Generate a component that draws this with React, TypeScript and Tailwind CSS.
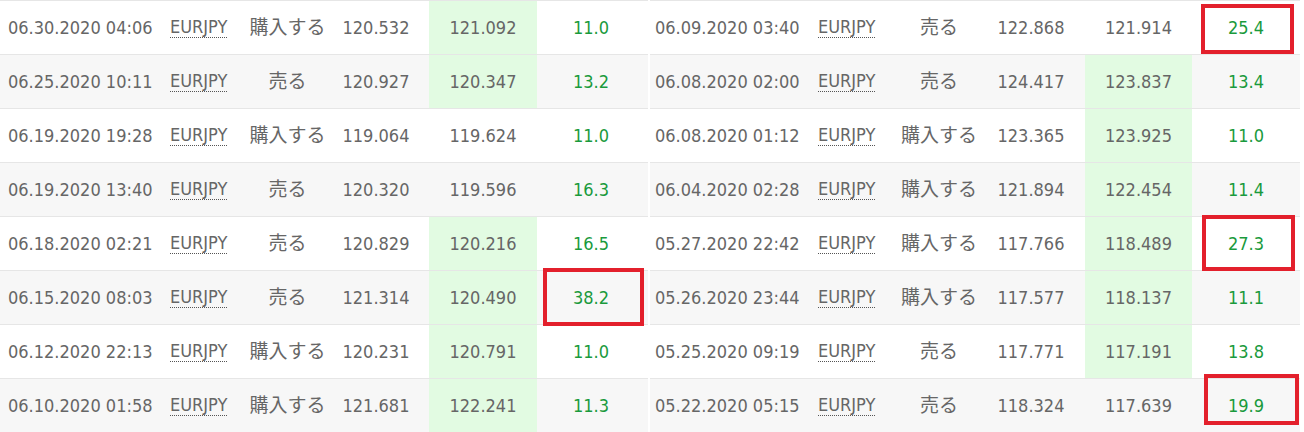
type Row = {
  date: string
  side: string
  open: string
  close: string
  pips: string
  hit?: boolean
  box?: string
}

const leftRows: Row[] = [
  { date: '06.30.2020 04:06', side: '購入する', open: '120.532', close: '121.092', pips: '11.0', hit: true },
  { date: '06.25.2020 10:11', side: '売る', open: '120.927', close: '120.347', pips: '13.2', hit: true },
  { date: '06.19.2020 19:28', side: '購入する', open: '119.064', close: '119.624', pips: '11.0' },
  { date: '06.19.2020 13:40', side: '売る', open: '120.320', close: '119.596', pips: '16.3' },
  { date: '06.18.2020 02:21', side: '売る', open: '120.829', close: '120.216', pips: '16.5', hit: true },
  {
    date: '06.15.2020 08:03',
    side: '売る',
    open: '121.314',
    close: '120.490',
    pips: '38.2',
    hit: true,
    box: 'left-[6px] -top-[3px] w-[101px] h-[58px]',
  },
  { date: '06.12.2020 22:13', side: '購入する', open: '120.231', close: '120.791', pips: '11.0', hit: true },
  { date: '06.10.2020 01:58', side: '購入する', open: '121.681', close: '122.241', pips: '11.3', hit: true },
]

const rightRows: Row[] = [
  {
    date: '06.09.2020 03:40',
    side: '売る',
    open: '122.868',
    close: '121.914',
    pips: '25.4',
    box: 'left-[9px] top-[3px] w-[93px] h-[50px]',
  },
  { date: '06.08.2020 02:00', side: '売る', open: '124.417', close: '123.837', pips: '13.4', hit: true },
  { date: '06.08.2020 01:12', side: '購入する', open: '123.365', close: '123.925', pips: '11.0', hit: true },
  { date: '06.04.2020 02:28', side: '購入する', open: '121.894', close: '122.454', pips: '11.4', hit: true },
  {
    date: '05.27.2020 22:42',
    side: '購入する',
    open: '117.766',
    close: '118.489',
    pips: '27.3',
    hit: true,
    box: 'left-[10px] -top-[2px] w-[93px] h-[56px]',
  },
  { date: '05.26.2020 23:44', side: '購入する', open: '117.577', close: '118.137', pips: '11.1', hit: true },
  { date: '05.25.2020 09:19', side: '売る', open: '117.771', close: '117.191', pips: '13.8', hit: true },
  {
    date: '05.22.2020 05:15',
    side: '売る',
    open: '118.324',
    close: '117.639',
    pips: '19.9',
    box: 'left-[12px] -top-[5px] w-[95px] h-[51px]',
  },
]

type Cols = {
  date: string
  symbol: string
  side: string
  open: string
  close: string
  pips: string
}

const leftCols: Cols = {
  date: 'w-[162px] pl-2',
  symbol: 'w-[80px] pl-2',
  side: 'w-[91px] text-center',
  open: 'w-[96px] pr-[10px] text-center',
  close: 'w-[108px] text-center',
  pips: 'w-[111px] pr-[3px] text-center',
}

const rightCols: Cols = {
  date: 'w-[160px] pl-[5px]',
  symbol: 'w-[85px] pl-2',
  side: 'w-[88px] text-center',
  open: 'w-[102px] pr-[6px] text-center',
  close: 'w-[107px] text-center',
  pips: 'w-[108px] text-center',
}

function TradeTable({ rows, cols }: { rows: Row[]; cols: Cols }) {
  return (
    <div className="flex flex-col">
      {rows.map((r, i) => (
        <div
          key={r.date}
          className={`flex h-[54px] items-stretch border-t border-[#e6e6e6] ${
            i % 2 === 1 ? 'bg-[#f7f7f7]' : 'bg-white'
          }`}
        >
          <div className={`${cols.date} flex items-center whitespace-nowrap`}>{r.date}</div>
          <div className={`${cols.symbol} flex items-center`}>
            <span className="border-b border-dotted border-[#555] leading-[20px]">EURJPY</span>
          </div>
          <div className={`${cols.side} flex items-center justify-center whitespace-nowrap text-[19px]`}>
            {r.side}
          </div>
          <div className={`${cols.open} flex items-center justify-center`}>{r.open}</div>
          <div
            className={`${cols.close} flex items-center justify-center ${r.hit ? 'bg-[#e2fbe2]' : ''}`}
          >
            {r.close}
          </div>
          <div className={`${cols.pips} relative flex items-center justify-center text-[#1a9a3c]`}>
            {r.pips}
            {r.box && (
              <div className={`absolute ${r.box} border-4 border-[#e3202c]`} />
            )}
          </div>
        </div>
      ))}
    </div>
  )
}

export default function App() {
  return (
    <div
      className="flex h-[432px] w-[1304px] gap-[2px] overflow-hidden bg-white text-[18px] text-[#666]"
      style={{ fontFamily: '"DejaVu Sans Condensed", "DejaVu Sans", "Noto Sans CJK JP", sans-serif' }}
    >
      <TradeTable rows={leftRows} cols={leftCols} />
      <TradeTable rows={rightRows} cols={rightCols} />
    </div>
  )
}
